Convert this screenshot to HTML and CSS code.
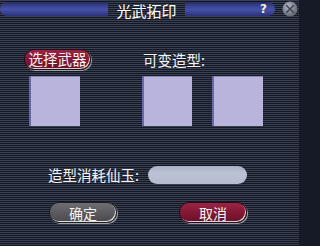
FILE: index.html
```html
<!DOCTYPE html>
<html>
<head>
<meta charset="utf-8">
<link rel="stylesheet" href="styles.css">
</head>
<body>
<div class="win">
  <div class="titlebar">
    <div class="bar bar-left"></div>
    <div class="title">光武拓印</div>
    <div class="bar bar-right"><span class="help">?</span></div>
    <div class="close">
      <svg width="16" height="16" viewBox="0 0 16 16">
        <defs>
          <radialGradient id="cg" cx="40%" cy="35%" r="70%">
            <stop offset="0" stop-color="#b4bac4"/>
            <stop offset="1" stop-color="#5a606c"/>
          </radialGradient>
        </defs>
        <circle cx="8" cy="8" r="7.5" fill="url(#cg)"/>
        <path d="M4.2 4.2 L11.8 11.8 M11.8 4.2 L4.2 11.8" stroke="#3e4450" stroke-width="1.6"/>
      </svg>
    </div>
  </div>
  <div class="row row1">
    <div class="btn btn-red btn-select">选择武器</div>
    <div class="label label-var">可变造型:</div>
  </div>
  <div class="row row2">
    <div class="slot slot1"></div>
    <div class="slot slot2"></div>
    <div class="slot slot3"></div>
  </div>
  <div class="row row3">
    <div class="label label-cost">造型消耗仙玉:</div>
    <div class="input"></div>
  </div>
  <div class="row row4">
    <div class="btn btn-grey">确定</div>
    <div class="btn btn-red btn-cancel">取消</div>
  </div>
</div>
</body>
</html>
```
FILE: styles.css
```css
html, body {
  margin: 0;
  padding: 0;
  background: #151a26;
}
.win {
  width: 299px;
  height: 246px;
  overflow: hidden;
  background: repeating-linear-gradient(to bottom, #384052 0px, #384052 1px, #131824 1px, #131824 2px);
  font-family: "Noto Sans CJK SC", "Noto Sans", sans-serif;
  color: #f4f4f4;
}
.titlebar {
  height: 18px;
  display: flex;
  align-items: flex-start;
}
.bar {
  flex: none;
  margin-top: 2px;
  height: 14px;
  background: linear-gradient(to bottom, #262c66 0%, #3c4798 35%, #4650a6 55%, #2a3278 100%);
}
.bar-left {
  width: 108px;
  border-top-left-radius: 7px;
  border-bottom-left-radius: 7px;
}
.title {
  flex: none;
  width: 77px;
  height: 18px;
  text-align: center;
  font-size: 15px;
  line-height: 22px;
  white-space: nowrap;
  overflow: visible;
  color: #ffffff;
}
.bar-right {
  width: 90px;
  border-top-right-radius: 7px;
  border-bottom-right-radius: 7px;
  display: flex;
  justify-content: flex-end;
  align-items: center;
}
.help {
  font-family: "DejaVu Sans", sans-serif;
  font-weight: bold;
  font-size: 12px;
  line-height: 14px;
  color: #f2f0d8;
  margin-right: 8px;
}
.close {
  flex: none;
  margin-left: 7px;
  margin-top: 1px;
  width: 16px;
  height: 16px;
}
.close svg { display: block; }
.row {
  display: flex;
  align-items: center;
}
.row1 {
  margin-top: 31px;
  padding-left: 24px;
  height: 21px;
}
.btn {
  flex: none;
  height: 21px;
  box-sizing: border-box;
  border-radius: 10px;
  display: flex;
  align-items: center;
  justify-content: center;
  font-size: 14px;
  line-height: 1;
  color: #f4f4f4;
}
.btn-red {
  background: linear-gradient(to bottom, #9a2444 0%, #7e1632 60%, #6a1028 100%);
  border: 1px solid #2a0a14;
  box-shadow: inset -1px -1px 0 #d8d0d8, 1px 1px 0 #9aa0a8;
}
.btn-grey {
  background: linear-gradient(to bottom, #6e6e72 0%, #58585c 60%, #4a4a4e 100%);
  border: 1px solid #202024;
  box-shadow: inset -1px -1px 0 #dcdcdc, 1px 1px 0 #a0a4a8;
}
.btn-select {
  width: 67px;
  font-size: 14.5px;
}
.label {
  font-size: 14.5px;
  line-height: 18px;
  white-space: nowrap;
  color: #f4f4f4;
}
.label-var {
  margin-left: 52px;
}
.row2 {
  margin-top: 6px;
  height: 50px;
  align-items: stretch;
}
.slot {
  flex: none;
  height: 50px;
  background: #b8b4dc;
  box-shadow: inset 2px 0 0 #6a68a8, inset 0 1px 0 #8e8cc0;
}
.slot1 { width: 51px; margin-left: 29px; }
.slot2 { width: 50px; margin-left: 62px; }
.slot3 { width: 51px; margin-left: 20px; }
.row3 {
  margin-top: 40px;
  height: 18px;
  padding-left: 48px;
}
.label-cost {
  width: 100px;
}
.input {
  flex: none;
  width: 99px;
  height: 18px;
  border-radius: 9px;
  background: linear-gradient(to bottom, #a8b0c4 0%, #bcc3d4 40%, #b4bbce 100%);
}
.row4 {
  margin-top: 18px;
  height: 21px;
  padding-left: 49px;
}
.row4 .btn { width: 68px; }
.btn-cancel { margin-left: 62px; }
```
